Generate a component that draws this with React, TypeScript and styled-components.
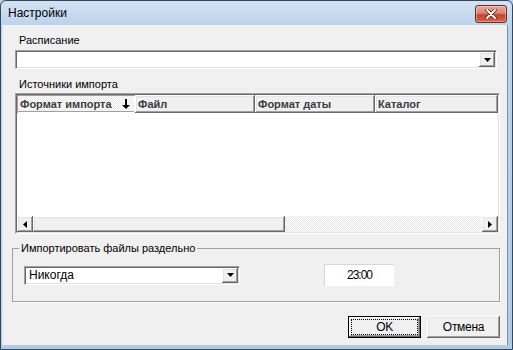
import React from 'react'
import styled, { createGlobalStyle, css } from 'styled-components'

const GlobalStyle = createGlobalStyle`
  html, body {
    margin: 0;
    padding: 0;
  }
  body {
    font-family: 'Liberation Sans', Arial, sans-serif;
    font-size: 11px;
    color: #000;
    background: #b9d1ea;
  }
`

const raised = css`
  background: #f0f0f0;
  box-shadow: inset -1px -1px #696969, inset 1px 1px #fff, inset -2px -2px #a0a0a0,
    inset 2px 2px #e3e3e3;
`

const dither = css`
  background: repeating-conic-gradient(#e9e9e9 0% 25%, #fff 0% 50%) 0 0 / 2px 2px;
`

const Window = styled.div`
  box-sizing: border-box;
  width: 513px;
  height: 350px;
  display: flex;
  flex-direction: column;
  background: linear-gradient(to bottom, #d3e3f4 0px, #bcd3eb 24px, #aecbe9 100%);
  border: 1px solid #34475c;
  border-radius: 6px 6px 0 0;
  overflow: hidden;
`

const TitleBar = styled.div`
  height: 24px;
  flex-shrink: 0;
  display: flex;
  align-items: center;
  justify-content: space-between;
  padding: 0 5px 0 7px;
`

const Title = styled.span`
  font-size: 12px;
  color: #000;
`

const CloseButton = styled.div`
  box-sizing: border-box;
  width: 32px;
  height: 18px;
  margin-top: 2px;
  display: flex;
  align-items: center;
  justify-content: center;
  border: 1px solid #6b2b22;
  border-radius: 3px;
  background: linear-gradient(to bottom, #e9a99c 0%, #d88473 45%, #c5452f 55%, #d0654d 100%);
  box-shadow: inset 0 0 0 1px rgba(255, 255, 255, 0.35);
`

const Client = styled.div`
  flex: 1;
  margin: 0 5px 4px 1px;
  background: #f0f0f0;
  display: flex;
  flex-direction: column;
  padding: 9px 7px 0 10px;
  box-shadow: inset 1px 0 #dfe8f1, 1px 0 #7a93ad;
`

const Label = styled.div`
  line-height: 13px;
  margin-left: 7px;
`

const Combo = styled.div<{ $width?: number }>`
  box-sizing: border-box;
  height: 19px;
  width: ${p => (p.$width ? `${p.$width}px` : 'auto')};
  display: flex;
  align-items: stretch;
  background: #fff;
  border-top: 1px solid #a0a0a0;
  border-left: 1px solid #a0a0a0;
  border-right: 1px solid #fff;
  border-bottom: 1px solid #fff;
  box-shadow: inset 1px 1px #696969, inset -1px -1px #e3e3e3;
  padding: 1px;
`

const ComboText = styled.div`
  flex: 1;
  font-size: 12px;
  line-height: 15px;
  padding-left: 3px;
`

const DropButton = styled.div`
  ${raised};
  width: 16px;
  display: flex;
  align-items: center;
  justify-content: center;
`

const TopCombo = styled(Combo)`
  margin: 3px 3px 0 3px;
`

const SourcesLabel = styled(Label)`
  margin-top: 9px;
`

const GridFrame = styled.div`
  height: 141px;
  box-sizing: border-box;
  margin: 2px 0 0 3px;
  border-top: 1px solid #a0a0a0;
  border-left: 1px solid #a0a0a0;
  border-right: 1px solid #fff;
  border-bottom: 1px solid #fff;
  display: flex;
`

const GridBody = styled.div`
  flex: 1;
  display: flex;
  flex-direction: column;
  background: #fff;
  border-top: 1px solid #696969;
  border-left: 1px solid #696969;
  border-right: 1px solid #e3e3e3;
  border-bottom: 1px solid #e3e3e3;
  overflow: hidden;
`

const HeaderRow = styled.div`
  display: flex;
  height: 18px;
  flex-shrink: 0;
`

const HeaderCell = styled.div<{ $width?: number; $sorted?: boolean }>`
  box-sizing: border-box;
  ${p => (p.$width ? `width: ${p.$width}px; flex-shrink: 0;` : 'flex: 1;')}
  display: flex;
  align-items: center;
  justify-content: space-between;
  padding: 0 5px 0 3px;
  font-weight: bold;
  color: #3c3c3c;
  white-space: nowrap;
  ${p =>
    p.$sorted
      ? css`
          ${dither};
          box-shadow: inset 1px 1px #a0a0a0, inset -1px -1px #fff, inset 0 -2px #a0a0a0;
        `
      : css`
          ${raised};
        `}
`

const GridRows = styled.div`
  flex: 1;
  background: #fff;
`

const ScrollBar = styled.div`
  display: flex;
  height: 16px;
  flex-shrink: 0;
  ${dither};
`

const ScrollButton = styled.div`
  ${raised};
  width: 16px;
  display: flex;
  align-items: center;
  justify-content: center;
`

const Thumb = styled.div`
  ${raised};
  width: 252px;
`

const Track = styled.div`
  flex: 1;
`

const GroupBox = styled.fieldset`
  margin: 8px 0 0 0;
  padding: 0;
  height: 60px;
  box-sizing: border-box;
  border: 1px solid #a0a0a0;
  box-shadow: 1px 1px #fff;
`

const Legend = styled.legend`
  margin-left: 6px;
  padding: 0 2px;
  line-height: 13px;
`

const GroupRow = styled.div`
  display: flex;
  align-items: center;
  padding: 9px 0 0 11px;
  gap: 84px;
`

const TimeField = styled.div`
  box-sizing: border-box;
  width: 70px;
  height: 22px;
  background: #fff;
  border-top: 1px solid #d6d6d6;
  border-left: 1px solid #d6d6d6;
  text-align: center;
  line-height: 20px;
  font-size: 12px;
  letter-spacing: -1px;
`

const ButtonRow = styled.div`
  display: flex;
  justify-content: flex-end;
  gap: 6px;
  margin-top: 14px;
`

const Button = styled.div<{ $default?: boolean }>`
  box-sizing: border-box;
  width: 73px;
  height: 22px;
  display: flex;
  align-items: center;
  justify-content: center;
  font-size: 12px;
  letter-spacing: -0.3px;
  ${raised};
  ${p =>
    p.$default &&
    css`
      border: 1px solid #000;
      padding: 2px;
      box-shadow: inset -1px -1px #696969, inset 1px 1px #fff, inset -2px -2px #a0a0a0;
    `}
`

const FocusRing = styled.span`
  flex: 1;
  align-self: stretch;
  display: flex;
  align-items: center;
  justify-content: center;
  border: 1px dotted #000;
`

const DownTriangle = () => (
  <svg width="7" height="4" viewBox="0 0 7 4">
    <path d="M0 0h7L3.5 4z" fill="#000" />
  </svg>
)

const SortArrow = () => (
  <svg width="8" height="10" viewBox="0 0 8 10">
    <path d="M3 0h2v6h3L4 10 0 6h3z" fill="#000" />
  </svg>
)

const SideTriangle = ({ dir }: { dir: 'left' | 'right' }) => (
  <svg width="4" height="7" viewBox="0 0 4 7">
    <path d={dir === 'left' ? 'M4 0v7L0 3.5z' : 'M0 0v7l4-3.5z'} fill="#000" />
  </svg>
)

const CloseGlyph = () => (
  <svg width="12" height="10" viewBox="0 0 12 10">
    <path
      d="M2 1l8 8M10 1l-8 8"
      stroke="#5b1e16"
      strokeWidth="3.4"
      strokeLinecap="round"
      fill="none"
    />
    <path d="M2 1l8 8M10 1l-8 8" stroke="#fff" strokeWidth="1.8" strokeLinecap="round" fill="none" />
  </svg>
)

const columns = [
  { title: 'Формат импорта', width: 118, sorted: true },
  { title: 'Файл', width: 120 },
  { title: 'Формат даты', width: 120 },
  { title: 'Каталог' },
]

export default function App() {
  return (
    <>
      <GlobalStyle />
      <Window>
        <TitleBar>
          <Title>Настройки</Title>
          <CloseButton>
            <CloseGlyph />
          </CloseButton>
        </TitleBar>
        <Client>
          <Label>Расписание</Label>
          <TopCombo>
            <ComboText />
            <DropButton>
              <DownTriangle />
            </DropButton>
          </TopCombo>

          <SourcesLabel>Источники импорта</SourcesLabel>
          <GridFrame>
            <GridBody>
              <HeaderRow>
                {columns.map(col => (
                  <HeaderCell key={col.title} $width={col.width} $sorted={col.sorted}>
                    {col.title}
                    {col.sorted && <SortArrow />}
                  </HeaderCell>
                ))}
              </HeaderRow>
              <GridRows />
              <ScrollBar>
                <ScrollButton>
                  <SideTriangle dir="left" />
                </ScrollButton>
                <Thumb />
                <Track />
                <ScrollButton>
                  <SideTriangle dir="right" />
                </ScrollButton>
              </ScrollBar>
            </GridBody>
          </GridFrame>

          <GroupBox>
            <Legend>Импортировать файлы раздельно</Legend>
            <GroupRow>
              <Combo $width={216}>
                <ComboText>Никогда</ComboText>
                <DropButton>
                  <DownTriangle />
                </DropButton>
              </Combo>
              <TimeField>23:00</TimeField>
            </GroupRow>
          </GroupBox>

          <ButtonRow>
            <Button $default>
              <FocusRing>OK</FocusRing>
            </Button>
            <Button>Отмена</Button>
          </ButtonRow>
        </Client>
      </Window>
    </>
  )
}
